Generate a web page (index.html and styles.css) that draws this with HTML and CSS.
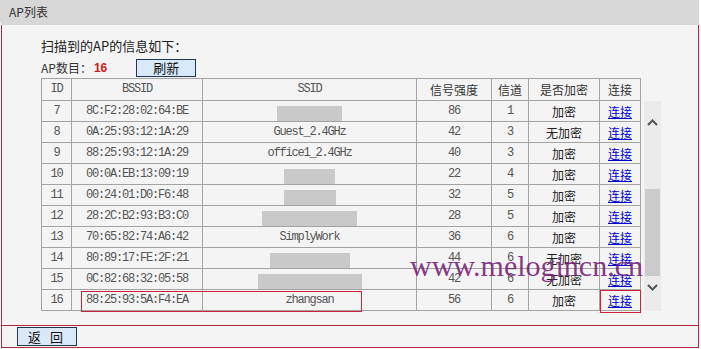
FILE: index.html
```html
<!DOCTYPE html>
<html lang="zh-CN">
<head>
    <meta charset="UTF-8">
    <title>AP列表</title>
    <link rel="stylesheet" href="styles.css">
</head>
<body>
<div class="panel">
    <div class="panel-head">AP列表</div>

    <div class="panel-body">
        <p class="intro">扫描到的AP的信息如下：</p>
        <div class="count-row">
            <span class="count-label">AP数目：</span>
            <span class="count">16</span>
            <button class="btn btn-refresh">刷新</button>
        </div>

        <div class="list-wrap">
            <table class="ap-table">
                <colgroup>
                    <col style="width: 30px">
                    <col style="width: 131px">
                    <col style="width: 214px">
                    <col style="width: 75px">
                    <col style="width: 37px">
                    <col style="width: 71px">
                    <col style="width: 41px">
                </colgroup>
                <thead>
                    <tr>
                        <th class="mono">ID</th>
                        <th class="mono">BSSID</th>
                        <th class="mono">SSID</th>
                        <th>信号强度</th>
                        <th>信道</th>
                        <th>是否加密</th>
                        <th>连接</th>
                    </tr>
                </thead>
                <tbody>
                    <tr><td class="mono">7</td><td class="mono">8C:F2:28:02:64:BE</td><td><span class="hidden-ssid" style="width: 65px"></span></td><td class="mono">86</td><td class="mono">1</td><td>加密</td><td><a href="#">连接</a></td></tr>
                    <tr><td class="mono">8</td><td class="mono">0A:25:93:12:1A:29</td><td class="mono">Guest_2.4GHz</td><td class="mono">42</td><td class="mono">3</td><td>无加密</td><td><a href="#">连接</a></td></tr>
                    <tr><td class="mono">9</td><td class="mono">88:25:93:12:1A:29</td><td class="mono">office1_2.4GHz</td><td class="mono">40</td><td class="mono">3</td><td>加密</td><td><a href="#">连接</a></td></tr>
                    <tr><td class="mono">10</td><td class="mono">00:0A:EB:13:09:19</td><td><span class="hidden-ssid" style="width: 51px"></span></td><td class="mono">22</td><td class="mono">4</td><td>加密</td><td><a href="#">连接</a></td></tr>
                    <tr><td class="mono">11</td><td class="mono">00:24:01:D0:F6:48</td><td><span class="hidden-ssid" style="width: 52px"></span></td><td class="mono">32</td><td class="mono">5</td><td>加密</td><td><a href="#">连接</a></td></tr>
                    <tr><td class="mono">12</td><td class="mono">28:2C:B2:93:B3:C0</td><td><span class="hidden-ssid" style="width: 95px"></span></td><td class="mono">28</td><td class="mono">5</td><td>加密</td><td><a href="#">连接</a></td></tr>
                    <tr><td class="mono">13</td><td class="mono">70:65:82:74:A6:42</td><td class="mono">SimplyWork</td><td class="mono">36</td><td class="mono">6</td><td>加密</td><td><a href="#">连接</a></td></tr>
                    <tr><td class="mono">14</td><td class="mono">80:89:17:FE:2F:21</td><td><span class="hidden-ssid" style="width: 80px"></span></td><td class="mono">44</td><td class="mono">6</td><td>无加密</td><td><a href="#">连接</a></td></tr>
                    <tr><td class="mono">15</td><td class="mono">0C:82:68:32:05:58</td><td><span class="hidden-ssid" style="width: 104px"></span></td><td class="mono">42</td><td class="mono">6</td><td>无加密</td><td><a href="#">连接</a></td></tr>
                    <tr><td class="mono">16</td><td class="mono">88:25:93:5A:F4:EA</td><td class="mono">zhangsan</td><td class="mono">56</td><td class="mono">6</td><td>加密</td><td><a href="#">连接</a></td></tr>
                </tbody>
            </table>

            <div class="scrollbar">
                <svg class="arrow" width="17" height="12" viewBox="0 0 17 12">
                    <path d="M4 8 L8.5 3.5 L13 8" fill="none" stroke="#555" stroke-width="2"/>
                </svg>
                <div class="thumb"></div>
                <svg class="arrow" width="17" height="12" viewBox="0 0 17 12">
                    <path d="M4 4 L8.5 8.5 L13 4" fill="none" stroke="#555" stroke-width="2"/>
                </svg>
            </div>
        </div>
    </div>

    <div class="panel-foot">
        <button class="btn btn-back">返 回</button>
    </div>

    <!-- annotations drawn over the screenshot -->
    <div class="mark mark-row"></div>
    <div class="mark mark-link"></div>
    <div class="watermark">www.melogincn.cn</div>
</div>
</body>
</html>
```

FILE: styles.css
```css
body {
    margin: 0;
    padding: 0;
    background-color: #ffffff;
    font-family: "Noto Sans CJK SC", "Noto Sans", sans-serif;
    font-size: 12px;
    color: #222;
}

/* Panel */
.panel {
    position: relative;
    width: 699px;
    height: 349px;
}

.panel-head {
    height: 25px;
    line-height: 24px;
    padding-left: 9px;
    background-color: #d7d7d7;
    border-bottom-left-radius: 4px;
    color: #333;
    font-size: 12px;
}

.panel-body {
    height: 300px;
    margin-left: 1px;
    border-left: 1px solid #b8283c;
    border-right: 1px solid #b8283c;
    background-color: #f4f4f4;
    padding-left: 39px;
    box-sizing: border-box;
}

.intro {
    margin: 0;
    padding-top: 13px;
    height: 20px;
    line-height: 15px;
    font-size: 13px;
    color: #222;
}

.count-row {
    display: flex;
    align-items: center;
    height: 19px;
    margin-top: 0;
}

.count-label {
    font-size: 12px;
    color: #333;
}

.count {
    color: #d01818;
    font-weight: bold;
    font-family: "Liberation Sans", Arial, sans-serif;
    font-size: 12px;
    margin-left: 2px;
}

.btn {
    background-color: #d9e9f8;
    border: 1px solid #22384f;
    padding: 0;
    color: #111;
    font-family: "Noto Sans CJK SC", sans-serif;
    font-size: 13px;
    line-height: 15px;
    cursor: pointer;
}

.btn-refresh {
    width: 60px;
    height: 18px;
    margin-left: 29px;
}

/* List */
.list-wrap {
    display: flex;
    align-items: flex-end;
    margin-top: 1px;
}

.ap-table {
    width: 599px;
    table-layout: fixed;
    border-collapse: collapse;
    border: 1px solid #a3a3a3;
}

.ap-table th,
.ap-table td {
    border: 1px solid #a3a3a3;
    height: 20px;
    padding: 0;
    text-align: center;
    line-height: 19px;
    white-space: nowrap;
    overflow: hidden;
    color: #222;
}

.ap-table th {
    font-weight: normal;
    color: #333;
    height: 21px;
}

.ap-table .mono {
    font-family: "Liberation Mono", "DejaVu Sans Mono", monospace;
    font-size: 12px;
    letter-spacing: -1.2px;
    color: #555;
}

.ap-table a {
    color: #0000cc;
    text-decoration: underline;
}

.hidden-ssid {
    display: inline-block;
    height: 15px;
    background-color: #c9c9c9;
    vertical-align: middle;
}

.scrollbar {
    width: 17px;
    height: 210px;
    margin-left: 3px;
    background-color: #ebebeb;
    display: flex;
    flex-direction: column;
    align-items: center;
}

.scrollbar .arrow {
    display: block;
    margin-top: 16px;
}

.scrollbar .thumb {
    width: 15px;
    height: 87px;
    margin-top: 60px;
    background-color: #cbcbcb;
}

.scrollbar .arrow:last-child {
    margin-top: 5px;
}

/* Footer */
.panel-foot {
    height: 21px;
    margin-left: 1px;
    border: 1px solid #b8283c;
    background-color: #f4f4f4;
    padding-left: 15px;
    display: flex;
    align-items: center;
}

.btn-back {
    width: 60px;
    height: 19px;
    font-size: 13px;
    letter-spacing: 3px;
}

/* Overlays */
.mark {
    position: absolute;
    border: 1px solid #d0203a;
    box-sizing: border-box;
}

.mark-row {
    left: 81px;
    top: 291px;
    width: 281px;
    height: 21px;
}

.mark-link {
    left: 600px;
    top: 290px;
    width: 41px;
    height: 23px;
}

.watermark {
    position: absolute;
    left: 410px;
    top: 251px;
    font-family: "Liberation Serif", "Times New Roman", serif;
    font-size: 30px;
    line-height: 30px;
    color: rgba(118, 32, 118, 0.88);
    white-space: nowrap;
}
```
